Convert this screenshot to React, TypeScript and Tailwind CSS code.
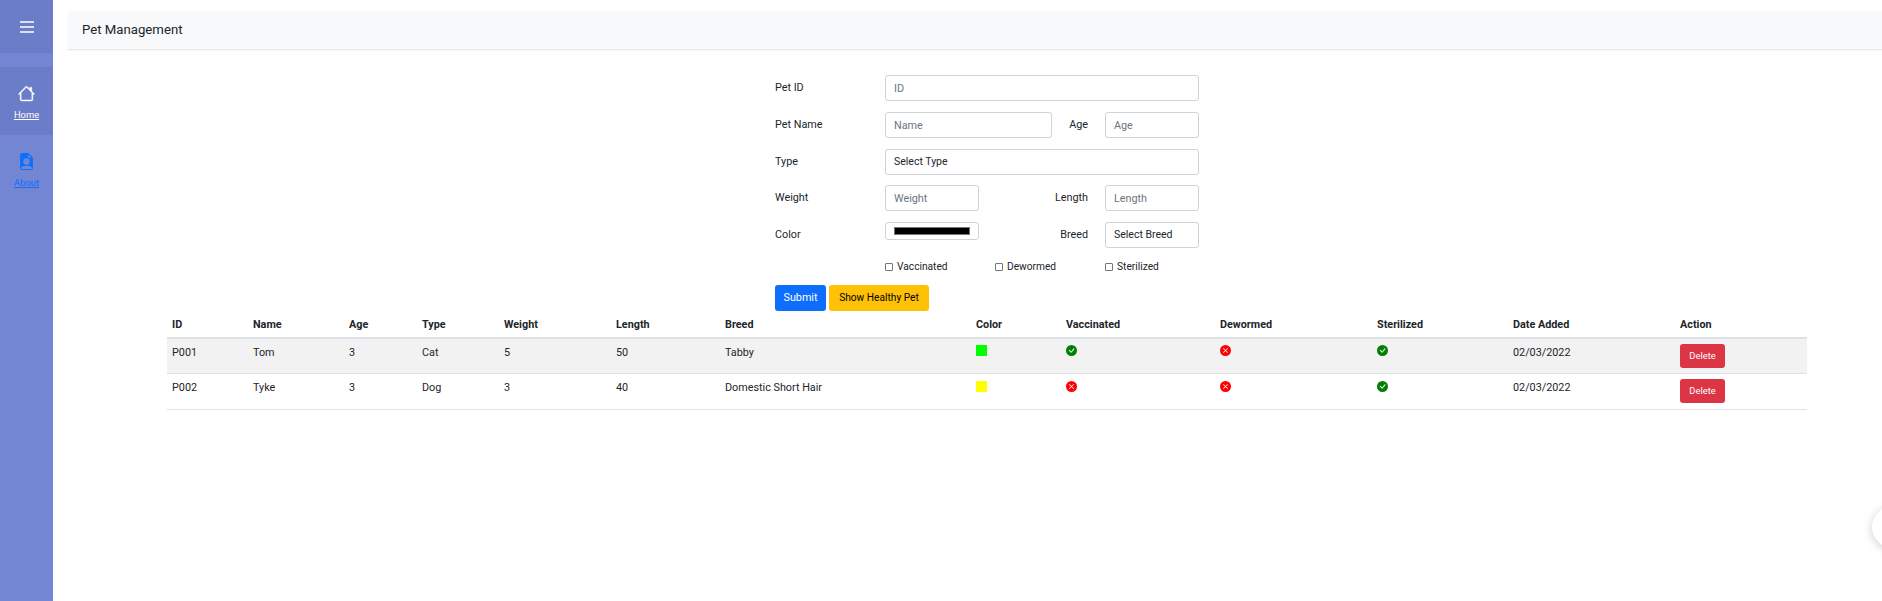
import { BsHouse, BsFileEarmarkPersonFill, BsCheckCircleFill, BsXCircleFill } from "react-icons/bs";

const font = { fontFamily: 'Roboto, "Noto Sans", sans-serif' };

function Field({ placeholder, w }: { placeholder: string; w: string }) {
  return (
    <input
      placeholder={placeholder}
      className={`${w} h-[26px] shrink-0 rounded-[3px] border border-[#ced4da] bg-white px-2 text-[10.8px] text-[#212529] outline-none placeholder:text-[#6c757d]`}
    />
  );
}

function Fake({ text, w }: { text: string; w: string }) {
  return (
    <div className={`${w} flex h-[26px] shrink-0 items-center rounded-[3px] border border-[#ced4da] bg-white px-2 text-[10.5px] text-[#212529]`}>
      {text}
    </div>
  );
}

function Check({ label, w }: { label: string; w: string }) {
  return (
    <label className={`${w} flex shrink-0 items-center gap-[4px] text-[10.2px] text-[#212529]`}>
      <input type="checkbox" className="m-0 size-[8px] appearance-none rounded-[1px] border border-[#767676] bg-white" />
      {label}
    </label>
  );
}

function Yes() {
  return <BsCheckCircleFill className="size-[11px] text-[#008000]" />;
}
function No() {
  return <BsXCircleFill className="size-[11px] text-[#ff0000]" />;
}

const rows = [
  { id: "P001", name: "Tom", age: "3", type: "Cat", weight: "5", length: "50", breed: "Tabby", color: "bg-[#00ff00]", v: true, d: false, s: true, date: "02/03/2022", bg: "bg-[#f2f2f2]", h: "h-[35px]" },
  { id: "P002", name: "Tyke", age: "3", type: "Dog", weight: "3", length: "40", breed: "Domestic Short Hair", color: "bg-[#ffff00]", v: false, d: false, s: true, date: "02/03/2022", bg: "bg-white", h: "h-[36px]" },
];

const heads = ["ID", "Name", "Age", "Type", "Weight", "Length", "Breed", "Color", "Vaccinated", "Dewormed", "Sterilized", "Date Added", "Action"];
const widths = [81, 96, 73, 82, 112, 109, 251, 90, 154, 157, 136, 167, 132];

export default function App() {
  return (
    <div style={font} className="relative flex h-[601px] w-[1882px] overflow-hidden bg-white text-[10.8px] text-[#212529]">
      <aside className="flex w-[53px] shrink-0 flex-col bg-[#7286d3]">
        <div className="flex h-[53px] items-center justify-center bg-[#6b7cc9]">
          <svg width="14" height="12" viewBox="0 0 14 12" className="text-white" fill="none" stroke="currentColor" strokeWidth="1.4">
            <path d="M0 1h14M0 6h14M0 11h14" />
          </svg>
        </div>
        <div className="mt-[14px] flex h-[68px] flex-col items-center bg-[#6b7cc9] pt-[18px] text-white">
          <BsHouse className="size-[17px] stroke-[0.4]" />
          <span className="mt-[6px] text-[9.4px] leading-[14px] underline">Home</span>
        </div>
        <div className="flex h-[68px] flex-col items-center pt-[18px] text-[#0d6efd]">
          <BsFileEarmarkPersonFill className="size-[17px]" />
          <span className="mt-[6px] text-[9.4px] leading-[14px] underline">About</span>
        </div>
      </aside>

      <main className="min-w-0 flex-1 pt-[11px]">
        <div className="ml-[15px] flex h-[39px] items-center border-b border-[#e8e8e8] bg-[#f8f9fa] pl-[14px] text-[13.2px] leading-none shadow-[0_1px_2px_rgba(0,0,0,0.05)]">
          Pet Management
        </div>

        <form className="ml-[722px] mt-[25px] flex w-[424px] flex-col">
          <div className="flex h-[26px] items-center">
            <span className="w-[110px] shrink-0">Pet ID</span>
            <Field placeholder="ID" w="w-[314px]" />
          </div>
          <div className="mt-[11px] flex h-[26px] items-center">
            <span className="w-[110px] shrink-0 pt-px">Pet Name</span>
            <Field placeholder="Name" w="w-[167px]" />
            <span className="w-[36px] shrink-0 pt-px text-right">Age</span>
            <span className="w-[17px] shrink-0" />
            <Field placeholder="Age" w="w-[94px]" />
          </div>
          <div className="mt-[11px] flex h-[26px] items-center">
            <span className="w-[110px] shrink-0">Type</span>
            <Fake text="Select Type" w="w-[314px]" />
          </div>
          <div className="mt-[10px] flex h-[26px] items-center">
            <span className="w-[110px] shrink-0 pt-px">Weight</span>
            <Field placeholder="Weight" w="w-[94px]" />
            <span className="w-[109px] shrink-0 pt-px text-right">Length</span>
            <span className="w-[17px] shrink-0" />
            <Field placeholder="Length" w="w-[94px]" />
          </div>
          <div className="mt-[11px] flex h-[26px] items-center">
            <span className="w-[110px] shrink-0 pt-px">Color</span>
            <div className="flex h-[18px] w-[94px] shrink-0 -translate-y-[4px] items-center justify-center rounded-[3px] border border-[#ced4da] bg-white">
              <div className="h-[8px] w-[76px] border border-[#767676] bg-black" />
            </div>
            <span className="w-[109px] shrink-0 pt-px text-right">Breed</span>
            <span className="w-[17px] shrink-0" />
            <Fake text="Select Breed" w="w-[94px]" />
          </div>
          <div className="ml-[110px] mt-[11px] flex h-[16px] items-center">
            <Check label="Vaccinated" w="w-[110px]" />
            <Check label="Dewormed" w="w-[110px]" />
            <Check label="Sterilized" w="w-[94px]" />
          </div>
          <div className="mt-[10px] flex gap-[3px]">
            <button type="button" className="h-[26px] w-[51px] rounded-[3px] bg-[#0d6efd] text-[10.8px] text-white">Submit</button>
            <button type="button" className="h-[26px] w-[100px] rounded-[3px] bg-[#ffc107] text-[10.2px] text-black">Show Healthy Pet</button>
          </div>
        </form>

        <table className="ml-[114px] mt-0 w-[1640px] table-fixed border-collapse text-left">
          <colgroup>
            {widths.map((w, i) => (
              <col key={i} style={{ width: w }} />
            ))}
          </colgroup>
          <thead>
            <tr className="h-[27px] border-b-2 border-[#dee2e6]">
              {heads.map((h) => (
                <th key={h} className="px-[5px] pt-[2px] align-middle text-[10.8px] font-bold">{h}</th>
              ))}
            </tr>
          </thead>
          <tbody>
            {rows.map((r) => (
              <tr key={r.id} className={`${r.bg} ${r.h} border-b border-[#dee2e6]`}>
                <td className="px-[5px] pb-[6px] align-middle">{r.id}</td>
                <td className="px-[5px] pb-[6px] align-middle">{r.name}</td>
                <td className="px-[5px] pb-[6px] align-middle">{r.age}</td>
                <td className="px-[5px] pb-[6px] align-middle">{r.type}</td>
                <td className="px-[5px] pb-[6px] align-middle">{r.weight}</td>
                <td className="px-[5px] pb-[6px] align-middle">{r.length}</td>
                <td className="px-[5px] pb-[6px] align-middle">{r.breed}</td>
                <td className="px-[5px] pb-[10px] align-middle"><div className={`size-[11px] ${r.color}`} /></td>
                <td className="px-[5px] pb-[10px] align-middle">{r.v ? <Yes /> : <No />}</td>
                <td className="px-[5px] pb-[10px] align-middle">{r.d ? <Yes /> : <No />}</td>
                <td className="px-[5px] pb-[10px] align-middle">{r.s ? <Yes /> : <No />}</td>
                <td className="px-[5px] pb-[6px] align-middle">{r.date}</td>
                <td className="px-[5px] align-middle">
                  <button type="button" className="block h-[24px] w-[45px] rounded-[3px] bg-[#dc3545] text-[9.4px] text-white">Delete</button>
                </td>
              </tr>
            ))}
          </tbody>
        </table>
      </main>

      <div className="absolute left-[1872px] top-[506px] size-[42px] rounded-full bg-white shadow-[0_2px_10px_rgba(0,0,0,0.2)]" />
    </div>
  );
}
